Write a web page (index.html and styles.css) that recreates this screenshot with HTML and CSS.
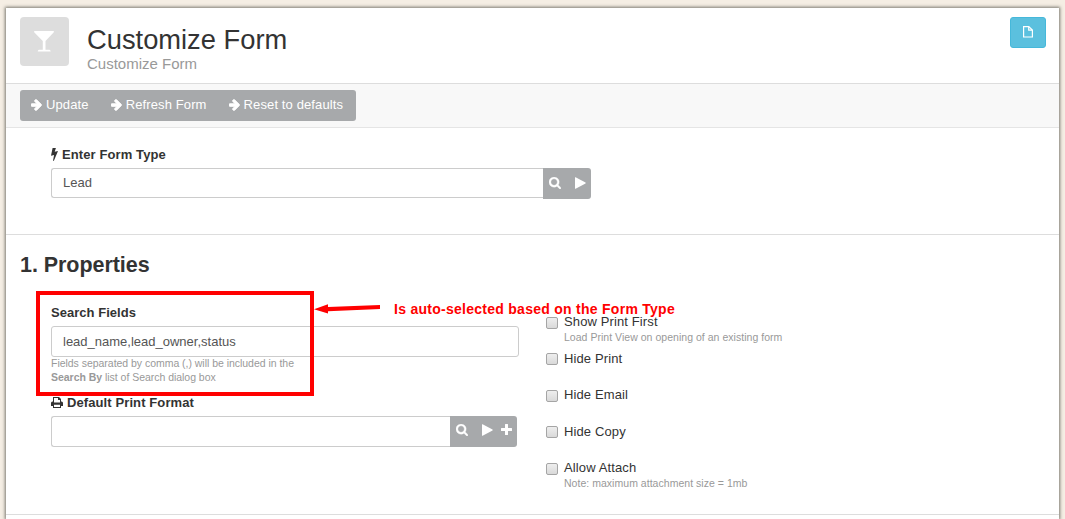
FILE: index.html
```html
<!DOCTYPE html>
<html lang="en">
<head>
<meta charset="utf-8">
<title>Customize Form</title>
<link rel="stylesheet" href="styles.css">
</head>
<body>
<svg class="defs" aria-hidden="true">
  <symbol id="arrow" viewBox="0 192 1536 1536"><path stroke="currentColor" stroke-width="110" d="M1472 960q0 54-37 91l-651 651q-39 37-91 37-51 0-90-37l-75-75q-38-38-38-91t38-91l293-293h-704q-52 0-84.500-37.500t-32.500-90.500v-128q0-53 32.500-90.500t84.500-37.500h704l-293-294q-38-36-38-90t38-90l75-75q38-38 90-38 53 0 91 38l651 651q37 35 37 90z"/></symbol>
  <symbol id="search" viewBox="0 128 1664 1664"><path stroke="currentColor" stroke-width="50" d="M1152 832q0-185-131.500-316.500t-316.500-131.500-316.500 131.500-131.500 316.500 131.500 316.500 316.500 131.500 316.500-131.500 131.500-316.500zm512 832q0 52-38 90t-90 38q-54 0-90-38l-343-342q-179 124-399 124-143 0-273.500-55.500t-225-150-150-225-55.500-273.500 55.500-273.500 150-225 225-150 273.500-55.500 273.500 55.500 225 150 150 225 55.500 273.500q0 220-124 399l343 343q37 37 37 90z"/></symbol>
  <symbol id="play" viewBox="0 0 11 12"><path d="M0 .6Q0 0 .6.200L10.500 5.600Q11 6 10.500 6.400L.6 11.800Q0 12 0 11.400z"/></symbol>
</svg>
<main class="paper">
  <header class="header">
    <div class="app-icon"><svg width="20" height="21" viewBox="0 0 20 21"><path d="M.6 0H19.400Q20.400.5 19.600 1.500L11.500 10V18.800H15.500Q16.700 19.200 16.700 20.500H3.700Q3.700 19.200 4.900 18.800H8.800V10L.4 1.500Q-.4.5.6 0z"/></svg></div>
    <div class="titles">
      <h1 class="title">Customize Form</h1>
      <div class="subtitle">Customize Form</div>
    </div>
    <button class="new-btn" aria-label="New"><svg width="10" height="12" viewBox="0 0 10 12"><path d="M.6.6H5.800L9.400 4V11H.6zM5.700.8V4.200H9.200"/></svg></button>
  </header>
  <nav class="toolbar">
    <div class="btn-group">
      <button class="tool"><svg class="ic-arrow"><use href="#arrow"/></svg>Update</button>
      <button class="tool"><svg class="ic-arrow"><use href="#arrow"/></svg>Refresh Form</button>
      <button class="tool"><svg class="ic-arrow"><use href="#arrow"/></svg>Reset to defaults</button>
    </div>
  </nav>
  <section class="form-type">
    <div class="label"><svg class="ic-bolt" viewBox="0 0 7 13"><path d="M1.600 0H4.900L3.700 3.700L7 3L2.900 12.800H2L3.100 7L0 7.700z"/></svg>Enter Form Type</div>
    <div class="link-field wide">
      <div class="input joined">Lead</div>
      <div class="addon"><svg class="ic-search"><use href="#search"/></svg><svg class="ic-play"><use href="#play"/></svg></div>
    </div>
  </section>
  <section class="properties">
    <h2 class="heading">1. Properties</h2>
    <div class="columns">
      <div class="col-left">
        <div class="label search-label">Search Fields</div>
        <div class="input plain">lead_name,lead_owner,status</div>
        <div class="help field-help">Fields separated by comma (,) will be included in the<br><b>Search By</b> list of Search dialog box</div>
        <div class="label print-label"><svg class="ic-print" viewBox="0 0 12 11"><path fill-rule="evenodd" d="M2 0H8L10 2V4.500H10.500Q12 4.500 12 6V9H10V11H2V9H0V6Q0 4.500 1.500 4.500H2zM3 1V5.500H9V3H7V1zM3 7.700V10H9V7.700z"/></svg>Default Print Format</div>
        <div class="link-field narrow">
          <div class="input joined"></div>
          <div class="addon"><svg class="ic-search"><use href="#search"/></svg><svg class="ic-play"><use href="#play"/></svg><svg class="ic-plus" viewBox="0 0 11 11"><path d="M4.500 0H6.500Q7 0 7 .5V4H10.500Q11 4 11 4.500V6.500Q11 7 10.500 7H7V10.500Q7 11 6.500 11H4.500Q4 11 4 10.500V7H.5Q0 7 0 6.500V4.500Q0 4 .5 4H4V.5Q4 0 4.500 0z"/></svg></div>
        </div>
      </div>
      <div class="col-right">
        <div class="check"><span class="box"></span><div class="check-text">Show Print First<div class="help">Load Print View on opening of an existing form</div></div></div>
        <div class="check"><span class="box"></span><div class="check-text">Hide Print</div></div>
        <div class="check"><span class="box"></span><div class="check-text">Hide Email</div></div>
        <div class="check"><span class="box"></span><div class="check-text">Hide Copy</div></div>
        <div class="check"><span class="box"></span><div class="check-text">Allow Attach<div class="help">Note: maximum attachment size = 1mb</div></div></div>
      </div>
    </div>
    <div class="callout-frame"></div>
    <svg class="callout-arrow" viewBox="0 0 66 10"><path d="M0 5.200L14 .2V3L66 1V5L14 7.300V9.600z"/></svg>
    <div class="callout-text">Is auto-selected based on the Form Type</div>
  </section>
</main>
</body>
</html>
```
FILE: styles.css
```css
* { box-sizing: border-box; }
body {
  margin: 0;
  height: 519px;
  overflow: hidden;
  padding: 8px 6px 0;
  background: #f5eee4;
  color: #333;
  font: 13px/20px "Liberation Sans", Arial, sans-serif;
  white-space: nowrap;
}
svg { display: block; flex: none; fill: currentColor; }
.defs { position: absolute; width: 0; height: 0; }
button { border: 0; margin: 0; padding: 0; font: inherit; color: #fff; background: none; }
.paper { height: 511px; background: #fff; box-shadow: 0 0 3px 1px rgba(70, 70, 60, .7); }

.header { display: flex; align-items: flex-start; height: 76px; padding: 9px 13px 0 14px; border-bottom: 1px solid #ddd; }
.app-icon { display: flex; align-items: center; justify-content: center; width: 49px; height: 49px; padding: 0 1px 0 0; border-radius: 4px; background: #ddd; color: #fff; }
.titles { flex: 1; padding: 8px 0 0 18px; }
.title { margin: 0; font-size: 27.3px; line-height: 30px; font-weight: 400; }
.subtitle { font-size: 15px; line-height: 18px; color: #999; }
.new-btn { display: flex; align-items: flex-start; justify-content: center; width: 36px; height: 31px; padding-top: 8px; border: 1px solid #46b8da; border-radius: 3px; background: #5bc0de; }
.new-btn svg { fill: none; stroke: #fff; stroke-width: 1.2; }

.toolbar { height: 44px; padding: 6px 14px; background: #f8f8f8; border-bottom: 1px solid #e5e5e5; }
.btn-group { display: inline-flex; width: 336px; height: 31px; gap: 22px; padding: 0 11px 2px; border-radius: 3px; background: #a7a9ab; }
.tool { display: flex; align-items: center; gap: 4px; letter-spacing: .12px; }
.ic-arrow { width: 11px; height: 12px; }

.form-type { height: 107px; padding: 17px 45px 0; border-bottom: 1px solid #ddd; }
.label { display: flex; align-items: center; font-weight: 700; height: 20px; margin-bottom: 3px; letter-spacing: .1px; }
.search-label { letter-spacing: .03px; }
.ic-bolt { width: 7px; height: 13px; margin: 0 4px 1px 0; }
.ic-print { width: 12px; height: 11px; margin: 0 4px 1px 0; }
.input { height: 31px; padding: 4px 11px; border: 1px solid #ccc; border-radius: 3px; background: #fff; color: #555; }
.plain { padding-top: 5px; }
.link-field { display: flex; }
.wide { width: 540px; }
.narrow { width: 466px; }
.joined { flex: 1; border-right: 0; border-radius: 3px 0 0 3px; }
.wide .joined { height: 30px; }
.addon { display: flex; align-items: center; height: 31px; padding: 0 5px 2px 6px; border-radius: 0 3px 3px 0; background: #a7a9ab; color: #fff; }
.narrow .addon { padding-bottom: 3px; }
.ic-search { width: 12px; height: 12px; }
.ic-play { width: 11px; height: 12px; margin-left: 14px; }
.ic-plus { width: 11px; height: 11px; margin: 0 0 1px 8px; }

.properties { position: relative; height: 280px; padding: 15px 14px 0; border-bottom: 1px solid #ddd; }
.heading { margin: 0; font-size: 22px; line-height: 30px; font-size: 21.5px; letter-spacing: -.05px; }
.columns { display: flex; gap: 27px; padding: 23px 0 0 31px; }
.col-left { width: 468px; }
.help { font-size: 10.5px; line-height: 14px; color: #999; }
.field-help { margin-top: -1px; letter-spacing: -.03px; }
.print-label { margin-top: 9px; }
.col-right { padding-top: 9px; }
.check { display: flex; height: 36.4px; gap: 6px; }
.box { width: 12px; height: 12px; margin-top: 5px; border: 1px solid #a5a5a5; border-radius: 2px; background: linear-gradient(#eee, #d9d9d9); }
.check-text { padding-top: .4px; letter-spacing: .12px; }
.check-text .help { margin-top: -2px; letter-spacing: .03px; }

.callout-frame { position: absolute; left: 30px; top: 56px; width: 278px; height: 105px; border: 4px solid #f00; }
.callout-arrow { position: absolute; left: 308px; top: 69px; width: 66px; height: 10px; fill: #f00; }
.callout-text { position: absolute; left: 388px; top: 64px; color: #f00; font-size: 14px; font-weight: 700; letter-spacing: .27px; }
```
